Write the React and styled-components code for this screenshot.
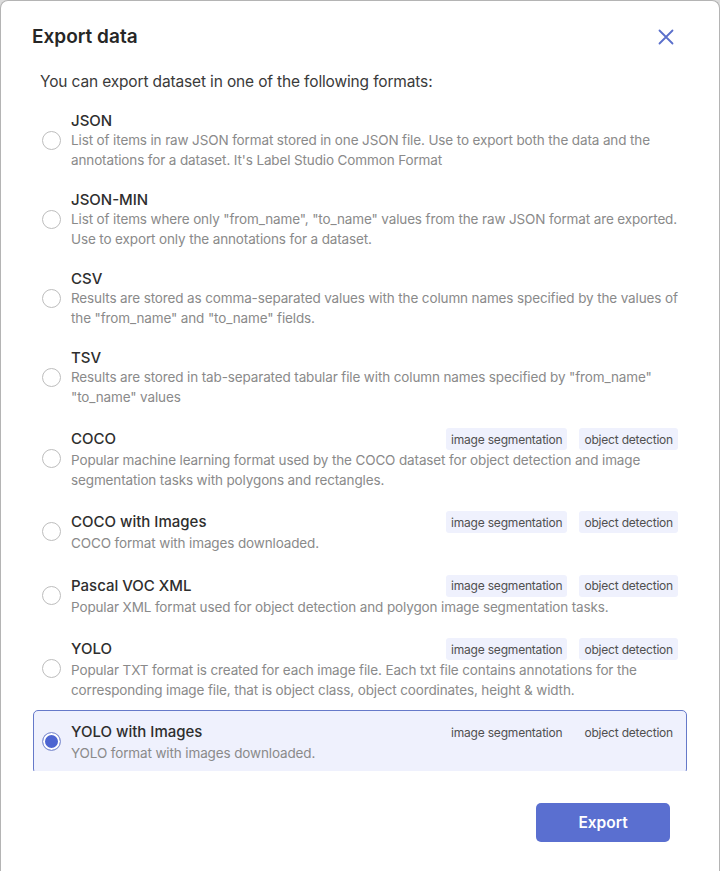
import React, { useState } from "react";
import styled, { createGlobalStyle } from "styled-components";

const GlobalStyle = createGlobalStyle`
  html, body {
    margin: 0;
    padding: 0;
    background: #dcdcdc;
  }
  * {
    box-sizing: border-box;
  }
`;

const formats = [
  {
    id: "JSON",
    title: "JSON",
    description:
      "List of items in raw JSON format stored in one JSON file. Use to export both the data and the annotations for a dataset. It's Label Studio Common Format",
  },
  {
    id: "JSON_MIN",
    title: "JSON-MIN",
    description:
      'List of items where only "from_name", "to_name" values from the raw JSON format are exported. Use to export only the annotations for a dataset.',
  },
  {
    id: "CSV",
    title: "CSV",
    description:
      'Results are stored as comma-separated values with the column names specified by the values of the "from_name" and "to_name" fields.',
  },
  {
    id: "TSV",
    title: "TSV",
    description:
      'Results are stored in tab-separated tabular file with column names specified by "from_name" "to_name" values',
  },
  {
    id: "COCO",
    title: "COCO",
    tags: ["image segmentation", "object detection"],
    description:
      "Popular machine learning format used by the COCO dataset for object detection and image segmentation tasks with polygons and rectangles.",
  },
  {
    id: "COCO_WITH_IMAGES",
    title: "COCO with Images",
    tags: ["image segmentation", "object detection"],
    description: "COCO format with images downloaded.",
  },
  {
    id: "VOC",
    title: "Pascal VOC XML",
    tags: ["image segmentation", "object detection"],
    description:
      "Popular XML format used for object detection and polygon image segmentation tasks.",
  },
  {
    id: "YOLO",
    title: "YOLO",
    tags: ["image segmentation", "object detection"],
    description:
      "Popular TXT format is created for each image file. Each txt file contains annotations for the corresponding image file, that is object class, object coordinates, height & width.",
  },
  {
    id: "YOLO_WITH_IMAGES",
    title: "YOLO with Images",
    tags: ["image segmentation", "object detection"],
    description: "YOLO format with images downloaded.",
  },
];

const App = () => {
  const [selected, setSelected] = useState("YOLO_WITH_IMAGES");

  return (
    <>
      <GlobalStyle />
      <Modal>
        <Header>
          <Title>Export data</Title>
          <CloseButton aria-label="Close">
            <svg width="16" height="16" viewBox="0 0 16 16" fill="none">
              <path
                d="M1.5 1.5L14.5 14.5M14.5 1.5L1.5 14.5"
                stroke="currentColor"
                strokeWidth="1.8"
                strokeLinecap="round"
              />
            </svg>
          </CloseButton>
        </Header>

        <Intro>You can export dataset in one of the following formats:</Intro>

        <FormatList>
          {formats.map((format) => {
            const isSelected = format.id === selected;
            return (
              <FormatItem
                key={format.id}
                $selected={isSelected}
                onClick={() => setSelected(format.id)}
              >
                <Radio $checked={isSelected} />
                <FormatInfo>
                  <FormatHeader $tagged={!!format.tags}>
                    <FormatTitle>{format.title}</FormatTitle>
                    {format.tags && (
                      <Tags>
                        {format.tags.map((tag) => (
                          <Tag key={tag}>{tag}</Tag>
                        ))}
                      </Tags>
                    )}
                  </FormatHeader>
                  <FormatDescription>{format.description}</FormatDescription>
                </FormatInfo>
              </FormatItem>
            );
          })}
        </FormatList>

        <Footer>
          <ExportButton>Export</ExportButton>
        </Footer>
      </Modal>
    </>
  );
};

const Modal = styled.div`
  min-height: 100vh;
  background: #fff;
  border: 1px solid #b4b4b4;
  border-bottom: none;
  border-radius: 8px 8px 0 0;
  font-family: Inter, "Open Sans", sans-serif;
  color: #333;
  display: flex;
  flex-direction: column;
`;

const Header = styled.div`
  display: flex;
  align-items: center;
  justify-content: space-between;
  padding: 24px 45px 0 31px;
  height: 48px;
`;

const Title = styled.h2`
  margin: 0;
  font-size: 19px;
  line-height: 24px;
  font-weight: 600;
  color: #262626;
`;

const CloseButton = styled.button`
  border: none;
  background: transparent;
  padding: 0;
  width: 16px;
  height: 16px;
  color: #5a6fcb;
  display: flex;
  cursor: pointer;
`;

const Intro = styled.p`
  margin: 22px 0 0 39px;
  font-size: 15.5px;
  line-height: 22px;
  letter-spacing: -0.15px;
  color: #3a3a3a;
`;

const FormatList = styled.div`
  margin: 8px 32px 0 32px;
  height: 670px;
  overflow: hidden;
`;

const FormatItem = styled.div`
  display: flex;
  align-items: center;
  gap: 10px;
  padding: 9px 8px 9px 8px;
  border: 1px solid ${(p) => (p.$selected ? "#6579c9" : "transparent")};
  border-radius: 5px;
  background: ${(p) => (p.$selected ? "#eff1fd" : "transparent")};
  cursor: pointer;
`;

const Radio = styled.span`
  flex: none;
  width: 19px;
  height: 19px;
  border-radius: 50%;
  border: 1px solid ${(p) => (p.$checked ? "#8d9ad3" : "#bdbdbd")};
  background: ${(p) => (p.$checked ? "#4d65d1" : "#fff")};
  box-shadow: ${(p) => (p.$checked ? "inset 0 0 0 2px #fff" : "none")};
`;

const FormatInfo = styled.div`
  flex: 1;
  min-width: 0;
`;

const FormatHeader = styled.div`
  display: flex;
  align-items: center;
  justify-content: space-between;
  min-height: ${(p) => (p.$tagged ? "24px" : "20px")};
`;

const FormatTitle = styled.div`
  font-size: 15px;
  line-height: 20px;
  font-weight: 500;
  color: #2e2e2e;
`;

const Tags = styled.div`
  display: flex;
  gap: 12px;
`;

const Tag = styled.span`
  height: 22px;
  padding: 0 5px;
  display: flex;
  align-items: center;
  border-radius: 3px;
  background: #eff1fd;
  font-size: 12px;
  letter-spacing: -0.2px;
  color: #505050;
`;

const FormatDescription = styled.div`
  font-size: 13.5px;
  line-height: 19.5px;
  letter-spacing: -0.13px;
  color: #8a8a8a;
`;

const Footer = styled.div`
  display: flex;
  justify-content: flex-end;
  padding: 32px 49px 28px 0;
`;

const ExportButton = styled.button`
  width: 134px;
  height: 39px;
  border: none;
  border-radius: 5px;
  background: #5a6fd0;
  color: #fff;
  font-family: Inter, "Open Sans", sans-serif;
  font-size: 15.5px;
  font-weight: 600;
  cursor: pointer;
`;

export default App;
